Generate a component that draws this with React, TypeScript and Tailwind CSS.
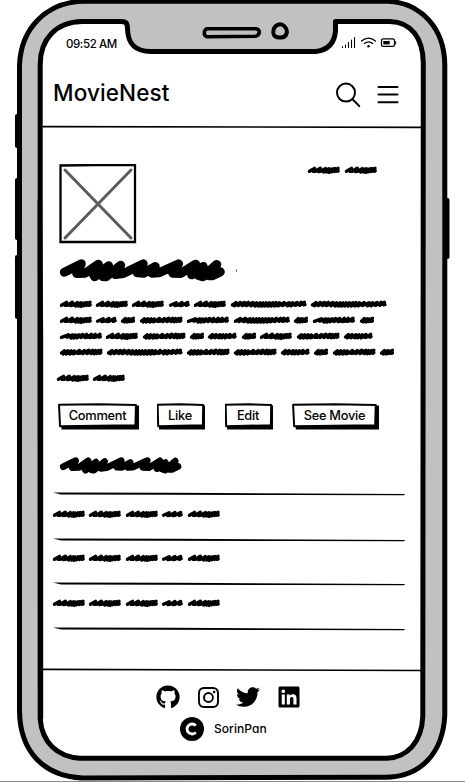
import type { ReactNode } from "react";
import { FaGithub, FaTwitter, FaLinkedin } from "react-icons/fa";
import { BsInstagram } from "react-icons/bs";

type Word = "a" | "b" | "c" | "d" | "e" | "f" | "g" | "h";

// Each placeholder word is one pen stroke: its width and the points it visits.
const WORDS: Record<Word, { w: number; d: string }> = {
  a: {
    w: 31.7,
    d: "M1.5 5.3L6.5 2.4L5.2 5.4L7.4 5.2L12.3 2.2L10.4 5.6L12.6 5.3L17.3 2.6L15.6 6L20.4 2.8L18.6 6L22.3 3L21 6.4L25 2.8L23.6 5.8L27.2 2.6L26.4 5.6L30 2.2L28.8 5.2L30.2 5",
  },
  b: { w: 20.7, d: "M1.5 5.2L7.2 2.8L5.7 5.6L7.8 5.4L13 2.6L11 5.5L13.2 5.2L18.6 2.4L17.2 5.4L19.2 4.7" },
  c: { w: 13.9, d: "M1.5 5.2L4.4 2.6L3.3 6L7.4 2.8L6 6L9.3 3L8.4 5.6L12.4 2.2L11 5.4L12.4 5" },
  d: {
    w: 42.3,
    d: "M1.5 5L4.3 2.8L3 6L7.6 2.8L6.2 6L11 2.8L9.8 6L14.3 3L13 5.8L14.6 5.4L19.5 2.6L18 5.4L20 5.2L24.3 2.6L22.8 5.6L28.8 2.2L27 5.6L32.6 2.4L31 5.6L35.3 2.6L34 5.8L38.2 2.6L37 5.6L40.8 2.2L39.8 5.3L40.8 4.8",
  },
  e: {
    w: 41.8,
    d: "M1.5 5.3L8.4 2.8L6.8 5.2L12.8 2.9L11 6L15.6 3L13.8 6.1L18.8 2.9L17 5.7L22.6 2.6L21 5.6L26.5 2.4L25 5.5L26.8 5.2L31.3 2.4L29.4 5.5L31.4 5.2L35.3 2.4L33.6 5.4L35.8 5.1L40 2.2L39 5.2L40.3 4.8",
  },
  f: {
    w: 75.5,
    d: "M1.5 5L5 2.6L3.4 5.8L9.3 2.6L7.3 5.6L13.4 2.5L11.6 5.6L17.2 2.4L15.3 5.6L21.8 2.6L20 5.7L25.5 2.8L24 6L29 2.9L27.4 6.1L32 2.9L30.4 6L35 2.9L33.4 6L38.4 2.8L36.8 6L42 2.8L40 6L45 2.6L43.5 6L48.5 2.8L46.8 5.8L48.6 5.4L53.2 2.5L51.6 5.5L58 2.7L56.5 5.9L61.6 2.8L60 5.8L66 2.5L64.2 5.4L70 2.4L68.6 5.3L73.4 2.2L72.5 4.9L74 4.6",
  },
  g: {
    w: 55.7,
    d: "M1.5 5.3L6.4 2.5L5 5.5L11.6 2.4L9.6 5.6L16 2.8L14 6.1L19 2.9L17.3 6.1L22.3 2.9L20.3 6L25.3 2.8L23.4 6L28.5 2.9L26.5 6.1L31.5 2.9L29.6 6L34.7 2.8L33 6L38 2.7L36.5 5.8L42.3 2.4L40.5 5.5L46.5 2.4L45 5.4L50 2.3L48.4 5.3L50 5.1L53.8 2.3L53 5L54.2 4.7",
  },
  h: {
    w: 28.4,
    d: "M1.5 5L4.4 2.6L3.3 5.8L8 2.6L6.8 5.7L12 2.7L10.7 5.8L15 2.8L13.6 5.8L18.2 2.8L17 5.8L22 2.5L20.7 5.4L22.4 5.2L26.7 2.3L25.6 5.2L27 4.7",
  },
};

const BODY: Word[][] = [
  ["a", "a", "a", "b", "a", "f", "f"],
  ["a", "b", "c", "d", "e", "g", "c", "e", "c"],
  ["e", "a", "d", "c", "h", "c", "a", "d", "h"],
  ["d", "f", "d", "d", "h", "c", "d", "c"],
];

function ScribbleLine({ words }: { words: Word[] }) {
  return (
    <div className="flex h-2 gap-[4.8px]">
      {words.map((k, i) => (
        <svg
          key={i}
          width={WORDS[k].w}
          height="8"
          viewBox={`0 0 ${WORDS[k].w} 8`}
          className="shrink-0 overflow-visible"
          fill="none"
          stroke="#000"
          strokeWidth="3.4"
          strokeLinecap="round"
          strokeLinejoin="round"
        >
          <path d={WORDS[k].d} />
        </svg>
      ))}
    </div>
  );
}

function ScribbleTitle({ className }: { className: string }) {
  return (
    <svg viewBox="0 0 495 68" className={className} fill="none" stroke="#000" strokeWidth="27" strokeLinecap="round" strokeLinejoin="round">
      <path d="M13 39L64 14L50 43L76 42L115 15L101 48L118 42L104 53L146 20L128 52L138 53L182 18L166 46L190 43L250 14L232 41L252 42L286 22L276 42L296 41L356 14L338 42L362 43L407 15L395 47L430 22L414 48L428 53L470 16L446 50L456 50L481 38" />
    </svg>
  );
}

function Rule({ className }: { className: string }) {
  return (
    <svg viewBox="0 0 352 4" preserveAspectRatio="none" className={className}>
      <path d="M0 .5L120 .8L352 1.9L351 3.3L240 3.1L8 2.4Z" />
    </svg>
  );
}

function SketchButton({ className, children }: { className: string; children: ReactNode }) {
  return (
    <button className={`relative h-[27px] shrink-0 ${className}`}>
      <svg viewBox="0 0 80 27" preserveAspectRatio="none" className="absolute inset-0 h-full w-full">
        <path d="M3 4L80 2.5V26.5H3.5Z" />
        <path d="M1 1.8L40 1.2L77 2L76.5 22.3L2 23.2Z" fill="#fff" stroke="#000" strokeWidth="2" strokeLinejoin="round" vectorEffect="non-scaling-stroke" />
      </svg>
      <span className="relative block pr-[2px] text-[12.8px] leading-[24px] font-[450] tracking-[-0.25px] whitespace-nowrap">{children}</span>
    </button>
  );
}

function PhoneFrame() {
  return (
    <svg viewBox="0 0 465 782" className="absolute inset-0 h-full w-full" fill="none" stroke="#000" strokeLinejoin="round">
      <path d="M0 781.5H465" stroke="#8b8b8b" />
      <path strokeWidth="4" strokeLinecap="round" d="M17 116V146M17 180V238M17 257V317M447.5 200V257" />
      <path
        fill="#c1c1c1"
        strokeWidth="5"
        d="M82 1.3H388C421 3 444.5 28 444.8 65V715C443 753 421 777 385 777.3L82 778C43 776 20 751 19.5 711V65C21 28 46 3 82 1.3Z"
      />
      <path
        fill="#fff"
        strokeWidth="5"
        d="M82 21.5H121C126 21.5 127.5 23 127.5 29C128 43 134 51.5 151 51.5H316C328 50 334.5 43 335.5 31V21.5H390C411 22 423 38 423.3 63L422.8 716C422 742 407 757.5 387 758.2H80C57 757 42 742 40.2 719V65C40 39 56 22 82 21.5Z"
      />
      <path d="M37.6 200L42 190L43.2 340V719L38 722Z" fill="#000" stroke="none" />
      <path d="M42.5 126.6L423 127.4M42.5 669.4L423 670.5" strokeWidth="1.6" />
      <path strokeWidth="3.6" d="M207 28.7H256Q259.3 29.2 259.3 32T256 36.2L207 36.7Q204.3 36 204.3 33T207 28.7Z" />
      <path strokeWidth="4" d="M279 24.5C283 23.5 287 28 287 32C286 37 283 38 279 37.5C274 37 272.5 34 273.5 30C274.5 26.5 276 25 279 24.5Z" />
    </svg>
  );
}

export default function App() {
  return (
    <div className="relative h-[782px] w-[465px] overflow-hidden bg-white font-['Inter','Open_Sans',sans-serif] text-black [font-feature-settings:'cv11']">
      <PhoneFrame />
      <div className="relative flex h-full flex-col pr-[44px] pl-[43px]">
        <div className="flex h-[64px] items-start justify-between pt-[36px] pr-[24px] pl-[23px]">
          <span className="text-[11.5px] leading-4 font-[450] tracking-[-0.4px]">09:52 AM</span>
          <svg width="56" height="14" viewBox="0 0 56 14" fill="none" stroke="#000" strokeLinecap="round">
            <path strokeWidth="1.1" d="M1.5 11.5V10.5M4.5 11.5V9M7.5 11.5V6.5M10.5 11.5V4M13.5 11.5V1.5" />
            <path strokeWidth="1.2" d="M20.5 5Q27.5 -.8 34.5 5M23.3 7.5Q27.5 4.2 31.7 7.5" />
            <circle cx="27.5" cy="10.3" r="1.2" fill="#000" stroke="none" />
            <rect x="40.5" y="2.8" width="13" height="7.6" rx="1.7" strokeWidth="1.3" />
            <path d="M42.3 5H48.7V8.4H42.3Z" fill="#000" stroke="none" />
            <path strokeWidth="1" d="M54.7 5.7V8" />
          </svg>
        </div>
        <header className="flex h-[64px] shrink-0 items-start justify-between pt-[14px] pr-[22px] pl-[10px]">
          <h1 className="text-[22.5px] leading-[30px] font-[450] tracking-[0.1px]">MovieNest</h1>
          <div className="flex gap-[16px] pt-[4px]">
            <svg width="26" height="26" viewBox="0 0 26 26" fill="none" stroke="#000" strokeWidth="2" strokeLinecap="round">
              <circle cx="11" cy="10.6" r="9" />
              <path d="M17.6 17.2L24.3 24.1" />
            </svg>
            <svg width="22" height="26" viewBox="0 0 22 26" fill="none" stroke="#000" strokeWidth="2" strokeLinecap="round">
              <path d="M1.5 5H20.5M1.5 12.6H20.5M1.5 20.2H20.5" />
            </svg>
          </div>
        </header>

        <main className="h-[542px] shrink-0">
          <div className="flex h-[131px] items-start justify-between pt-[36px] pr-[44.5px] pl-[16px]">
            <svg width="78" height="80" viewBox="0 0 78 80" fill="none">
              <path d="M1.5 1.5L38 1L76 1.2L76 78L1.5 78Z" stroke="#000" strokeWidth="2.3" />
              <path d="M6 6L72 74M72 6L6 74" stroke="#5c5c5c" strokeWidth="3" strokeLinecap="round" />
            </svg>
            <div className="pt-[2px]">
              <ScribbleLine words={["a", "a"]} />
            </div>
          </div>
          <div className="flex items-center gap-[11.5px] pl-[16.5px]">
            <ScribbleTitle className="h-[23px] w-[165px] overflow-visible" />
            <span className="h-[3px] w-px bg-neutral-500" />
          </div>
          <div className="mt-[18.3px] flex flex-col gap-[7.8px] pl-[16.5px]">
            {BODY.map((words, i) => (
              <ScribbleLine key={i} words={words} />
            ))}
          </div>
          <div className="mt-[18.5px] pl-[13.5px]">
            <ScribbleLine words={["a", "a"]} />
          </div>
          <div className="mt-[20.5px] flex pl-[15px]">
            <SketchButton className="w-[81px]">Comment</SketchButton>
            <SketchButton className="ml-[18px] w-[48px]">Like</SketchButton>
            <SketchButton className="ml-[20px] w-[48px]">Edit</SketchButton>
            <SketchButton className="ml-[19px] w-[87px]">See Movie</SketchButton>
          </div>
          <div className="mt-[27.5px] pl-[16.5px]">
            <ScribbleTitle className="h-[17px] w-[121.5px] overflow-visible" />
          </div>
          <div className="mt-[18px] flex flex-col pl-[10px]">
            <Rule className="h-1 w-[352px]" />
            <div className="h-[42px] pt-[14px]">
              <ScribbleLine words={["a", "a", "a", "b", "a"]} />
            </div>
            <Rule className="h-1 w-[352px]" />
            <div className="h-[40px] pt-[12px]">
              <ScribbleLine words={["a", "a", "a", "b", "a"]} />
            </div>
            <Rule className="h-1 w-[352px]" />
            <div className="h-[41px] pt-[13px]">
              <ScribbleLine words={["a", "a", "a", "b", "a"]} />
            </div>
            <Rule className="h-1 w-[352px]" />
          </div>
        </main>

        <footer className="flex flex-col pt-[15px]">
          <div className="flex h-6 items-center gap-[16px] pl-[113px]">
            <FaGithub size={24} />
            <BsInstagram size={21} className="ml-[2px]" />
            <FaTwitter size={24} className="ml-px" />
            <FaLinkedin size={24} className="ml-px" />
          </div>
          <div className="mt-[8px] flex h-6 items-center gap-[10px] pl-[137px]">
            <svg width="24" height="24" viewBox="0 0 24 24">
              <circle cx="12" cy="12" r="12" />
              <path d="M15.8 8.7A5 5 0 1 0 15.8 15.3" fill="none" stroke="#fff" strokeWidth="2.8" />
            </svg>
            <span className="pb-px text-[12px] leading-4 font-[450] tracking-[0.05px]">SorinPan</span>
          </div>
        </footer>
      </div>
    </div>
  );
}
